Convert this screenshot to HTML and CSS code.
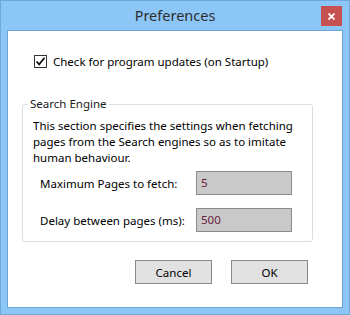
FILE: index.html
```html
<!DOCTYPE html>
<html lang="en">

<head>
    <meta charset="UTF-8">
    <meta name="viewport" content="width=device-width, initial-scale=1.0">
    <title>Preferences</title>
    <link rel="stylesheet" href="styles.css">
</head>

<body>
    <div class="window">
        <div class="titlebar">
            <span class="title">Preferences</span>
            <button class="closeButton" aria-label="Close">
                <svg width="7" height="7" viewBox="0 0 7 7">
                    <path d="M0.5 0.5 L6.5 6.5 M6.5 0.5 L0.5 6.5" stroke="#fff" stroke-width="1.8" />
                </svg>
            </button>
        </div>

        <div class="client">
            <label class="checkRow">
                <span class="checkBox">
                    <svg width="11" height="11" viewBox="0 0 11 11">
                        <path d="M1.5 5.5 L4.2 8.3 L9.5 1.8" fill="none" stroke="#111" stroke-width="1.8" />
                    </svg>
                </span>
                Check for program updates (on Startup)
            </label>

            <fieldset class="group">
                <legend>Search Engine</legend>
                <p class="info">This section specifies the settings when fetching<br>pages from the Search engines so as to imitate<br>human behaviour.</p>
                <div class="fields">
                    <span class="fieldLabel">Maximum Pages to fetch:</span>
                    <span class="fieldBox">5</span>
                    <span class="fieldLabel">Delay between pages (ms):</span>
                    <span class="fieldBox">500</span>
                </div>
            </fieldset>

            <div class="buttons">
                <button class="dlgButton">Cancel</button>
                <button class="dlgButton">OK</button>
            </div>
        </div>
    </div>
</body>

</html>
```

FILE: styles.css
```css
body {
    margin: 0;
    padding: 0;
    font-family: "Noto Sans", "Open Sans", sans-serif;
    font-size: 11.5px;
    color: #000;
}

.window {
    width: 350px;
    height: 315px;
    box-sizing: border-box;
    border: 1px solid #6fa8da;
    background-color: #8cc6f7;
    padding: 0 6px 6px 6px;
    display: flex;
    flex-direction: column;
}

.titlebar {
    position: relative;
    height: 29px;
    display: flex;
    justify-content: center;
    align-items: center;
}

.title {
    font-size: 14.5px;
    color: #2e2e2e;
    line-height: 29px;
}

.closeButton {
    position: absolute;
    top: 5px;
    right: 1px;
    width: 21px;
    height: 20px;
    padding: 0;
    border: none;
    background-color: #c75050;
    display: flex;
    justify-content: center;
    align-items: center;
}

.client {
    flex: 1;
    background-color: #fff;
    border: 1px solid #6fa3d2;
    display: flex;
    flex-direction: column;
}

.checkRow {
    display: flex;
    align-items: center;
    gap: 6px;
    height: 17px;
    margin: 22px 0 0 26px;
}

.checkBox {
    width: 11px;
    height: 11px;
    border: 1px solid #333;
    background-color: #fff;
    display: flex;
}

.group {
    margin: 26px 29px 0 14px;
    padding: 6px 10px 9px 10px;
    border: 1px solid #d8dfe5;
    border-radius: 3px;
}

.group legend {
    margin-left: -5px;
    padding: 0 2px;
    line-height: 16px;
    color: #1a1a1a;
}

.info {
    margin: 0;
    line-height: 16px;
    white-space: nowrap;
}

.fields {
    display: grid;
    grid-template-columns: 156px 96px;
    row-gap: 13px;
    align-items: center;
    margin-top: 5px;
    padding-left: 7px;
}

.fieldBox {
    height: 22px;
    line-height: 22px;
    border: 1px solid #8c8c8c;
    background-color: #c9c9c9;
    color: #6a1d3c;
    padding-left: 4px;
}

.buttons {
    display: flex;
    justify-content: flex-end;
    gap: 19px;
    margin: 18px 34px 0 0;
}

.dlgButton {
    width: 77px;
    height: 24px;
    border: 1px solid #8a8a8a;
    background-color: #e1e1e1;
    font-family: "Noto Sans", "Open Sans", sans-serif;
    font-size: 11.5px;
    color: #000;
    padding: 0;
}
```
